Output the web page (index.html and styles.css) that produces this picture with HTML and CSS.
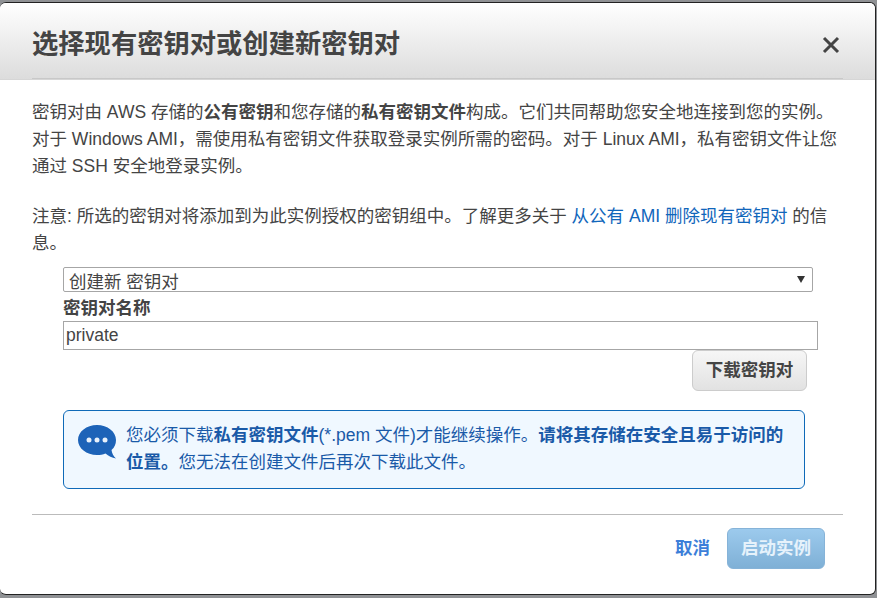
FILE: index.html
```html
<!DOCTYPE html>
<html lang="zh-CN">
<head>
<meta charset="utf-8">
<title>选择现有密钥对或创建新密钥对</title>
<link rel="stylesheet" href="styles.css">
</head>
<body>
<div class="dialog">
  <header class="head">
    <h1 class="title">选择现有密钥对或创建新密钥对</h1>
    <svg class="close" width="18" height="18" viewBox="0 0 18 18"><path d="M2 2 16 16M16 2 2 16" stroke="#444" stroke-width="3" fill="none"/></svg>
  </header>
  <div class="body">
    <p class="para">密钥对由 AWS 存储的<b>公有密钥</b>和您存储的<b>私有密钥文件</b>构成。它们共同帮助您安全地连接到您的实例。对于 Windows AMI，需使用私有密钥文件获取登录实例所需的密码。对于 Linux AMI，私有密钥文件让您通过 SSH 安全地登录实例。</p>
    <p class="para note">注意: 所选的密钥对将添加到为此实例授权的密钥组中。了解更多关于 <a class="link">从公有 AMI 删除现有密钥对</a> 的信息。</p>
    <div class="form">
      <div class="select"><span class="select-text">创建新 密钥对</span><span class="arrow"></span></div>
      <div class="label">密钥对名称</div>
      <div class="input">private</div>
      <div class="dl-row"><div class="btn-dl">下载密钥对</div></div>
    </div>
    <div class="info">
      <svg class="bubble" width="38" height="34" viewBox="0 0 38 34"><path d="M19 0C8.500 0 0 6.700 0 15c0 8.300 8.500 15 19 15 3 0 6-.5 8.500-1.500 3 2.500 6.500 4.500 10.500 5-2.500-2-4-5-4.500-8.500C36.500 22.500 38 19 38 15 38 6.700 29.500 0 19 0Z" fill="#1d63b8"/><circle cx="11" cy="15" r="2.500" fill="#e8f1fb"/><circle cx="19" cy="15" r="2.500" fill="#e8f1fb"/><circle cx="27" cy="15" r="2.500" fill="#e8f1fb"/></svg>
      <p class="info-text">您必须下载<b>私有密钥文件</b>(*.pem 文件)才能继续操作。<b>请将其存储在安全且易于访问的位置。</b>您无法在创建文件后再次下载此文件。</p>
    </div>
  </div>
  <footer class="foot">
    <a class="cancel">取消</a>
    <div class="btn-launch">启动实例</div>
  </footer>
</div>
</body>
</html>
```
FILE: styles.css
```css
* { box-sizing: border-box; }
html, body { margin: 0; height: 598px; overflow: hidden; }
body {
  background: #8f9194;
  font-family: "Liberation Sans", "Noto Sans CJK SC", sans-serif;
  color: #444;
  font-size: 17.5px;
}
.dialog {
  margin: 2px 0 0 0;
  width: 876px;
  height: 593px;
  background: #fff;
  border: 1px solid #222;
  border-left-width: 0;
  border-radius: 6px;
  display: flex;
  flex-direction: column;
}
.head {
  height: 77px;
  flex: none;
  border-radius: 6px 6px 0 0;
  background:
    linear-gradient(#c8c8c8, #c8c8c8) 32px 100% / 811px 1px no-repeat,
    linear-gradient(#fff, #dcdcdc);
  border-bottom: 1px solid #d6d6d6;
  padding: 0 35px 0 32px;
  display: flex;
  align-items: center;
  justify-content: space-between;
}
.title { margin: 6px 0 0; font-size: 26.3px; font-weight: 700; line-height: 74px; color: #444; }
.close { margin-top: 7px; }
.body { padding: 19px 32px 0; flex: 1; }
.para { margin: 0; line-height: 27px; }
.note { margin-top: 23px; }
.link { color: #1166bb; }
.form { padding-left: 31px; margin-top: 10px; }
.select {
  width: 750px;
  height: 25px;
  border: 1px solid #a6a6a6;
  border-radius: 2px;
  padding-left: 5px;
  line-height: 29px;
  display: flex;
  justify-content: space-between;
  overflow: hidden;
}
.arrow {
  width: 0; height: 0;
  margin: 8px 7px 0 0;
  border-left: 4px solid transparent;
  border-right: 4px solid transparent;
  border-top: 7px solid #333;
}
.label { font-weight: 700; line-height: 25px; padding-top: 4px; }
.input {
  width: 755px;
  height: 29px;
  border: 1px solid #a6a6a6;
  padding-left: 2px;
  line-height: 27px;
}
.dl-row { display: flex; justify-content: flex-end; width: 744px; }
.btn-dl {
  width: 115px;
  height: 41px;
  line-height: 39px;
  text-align: center;
  font-weight: 700;
  border: 1px solid #ccc;
  border-radius: 6px;
  background: linear-gradient(#f6f6f6, #e2e2e2);
}
.info {
  margin: 19px 6px 0 31px;
  width: 742px;
  height: 79px;
  background: #f0f8ff;
  border: 1px solid #0f6ab8;
  border-radius: 6px;
  padding: 11px 14px 0;
  display: flex;
  color: #1a5aa8;
}
.bubble { flex: none; margin: 3px 10px 0 0; }
.info-text { margin: 0; line-height: 27px; }
.foot {
  margin: 0 32px;
  border-top: 1px solid #bbb;
  height: 80px;
  flex: none;
  display: flex;
  justify-content: flex-end;
  align-items: flex-start;
  padding: 13px 18px 0 0;
}
.cancel { color: #3d7fd9; font-weight: 700; line-height: 41px; margin-right: 17px; }
.btn-launch {
  width: 98px;
  height: 41px;
  line-height: 39px;
  text-align: center;
  font-weight: 700;
  color: #e6f2fb;
  border: 1px solid #86b3d8;
  border-radius: 6px;
  background: linear-gradient(#9ccaed, #7fb0d6);
}
```
